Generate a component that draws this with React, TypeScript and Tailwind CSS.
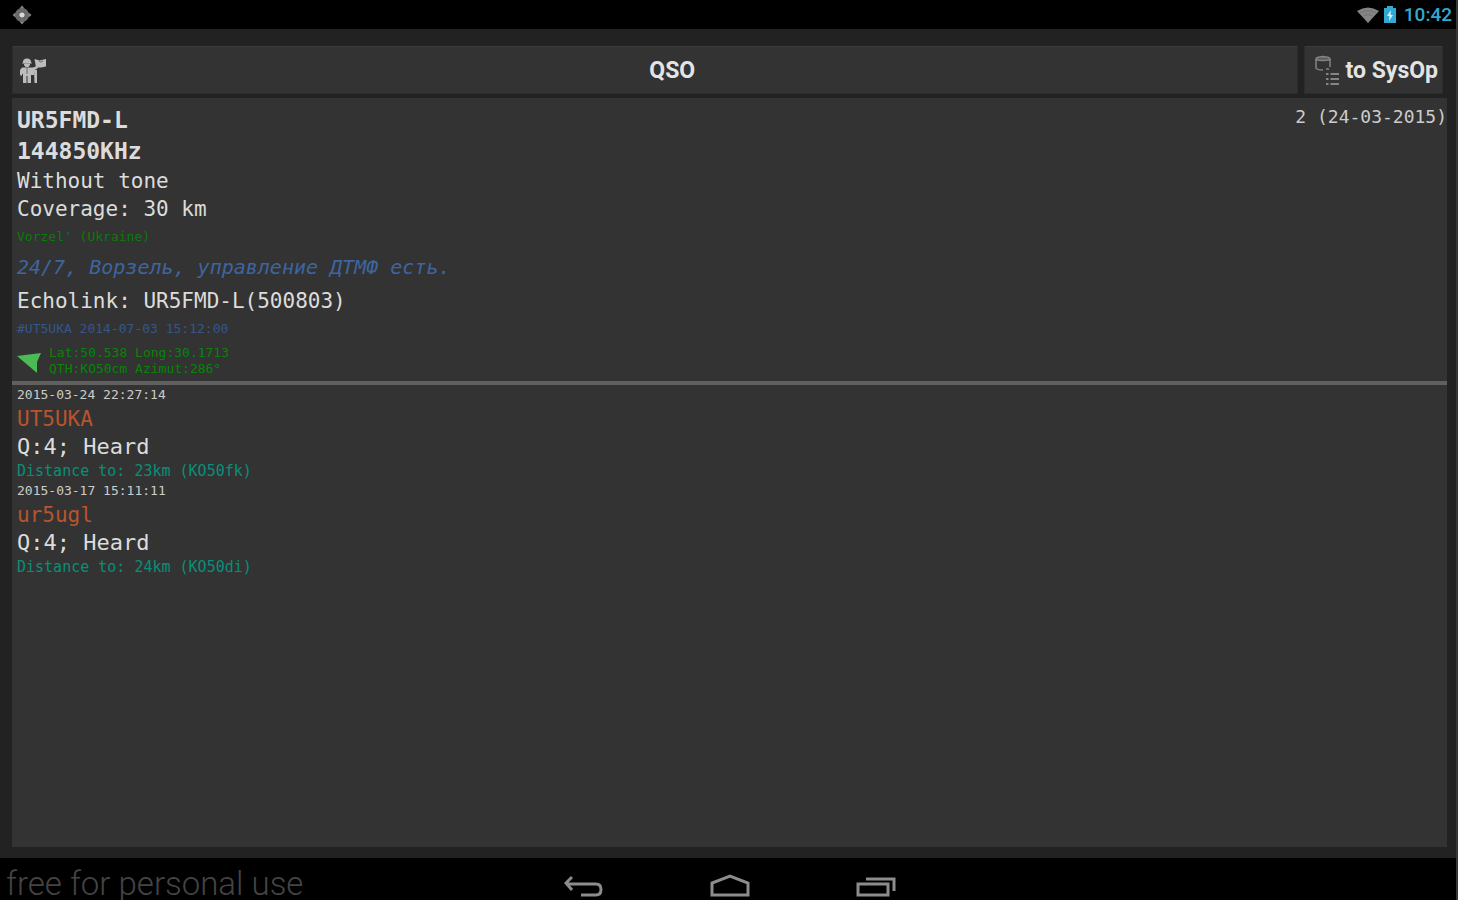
import type { ReactNode } from "react";

type Report = { time: string; call: string; quality: string; distance: string };

const reports: Report[] = [
  { time: "2015-03-24 22:27:14", call: "UT5UKA", quality: "Q:4; Heard", distance: "Distance to: 23km (KO50fk)" },
  { time: "2015-03-17 15:11:11", call: "ur5ugl", quality: "Q:4; Heard", distance: "Distance to: 24km (KO50di)" },
];

function GpsIcon() {
  return (
    <svg className="size-5" viewBox="0 0 20 20" fill="none" aria-hidden="true">
      <circle cx="10" cy="10" r="5" stroke="#6a6a6a" strokeWidth="4" />
      <path d="M10 0.5 12.5 3.5h-5zM10 19.5l2.5-3h-5zM.5 10l3-2.5v5zM19.5 10l-3-2.5v5z" fill="#858585" />
      <circle cx="10" cy="10" r="2.8" fill="#d8d8d8" />
    </svg>
  );
}

function PersonIcon() {
  return (
    <svg className="h-7 w-7" viewBox="0 0 28 28" aria-hidden="true">
      <g fill="#bcbcbc">
        <path d="M4 5q0-3.500 4-3.500T12 5l1 1.500H3z" />
        <path d="M5 6.500h6v1.500L9.500 10h-3L5 8z" />
        <path d="M3 10.500h11l4-1.500 1 2-4 2.500V18h-3v8H8.500v-7h-1v7H4v-9H3v2l-2-1v-5z" />
        <path d="M15 13h3v13h-2.500z" />
        <path d="M15.500 2l5 1.500L27 2v7.500l-5 1h-5z" />
      </g>
      <path d="M8 11v6M20 4l1.500 1L24 4" stroke="#6a6a6a" strokeWidth="1" fill="none" />
    </svg>
  );
}

function SysopIcon() {
  return (
    <svg className="h-8 w-6" viewBox="0 0 24 32" fill="none" stroke="#858585" aria-hidden="true">
      <path d="M1 4q0-2 7-2.500Q15 2 15 4q0 1.500-7 1.500T1 4z" strokeWidth="1.500" fill="#5c5c5c" />
      <path d="M1 4v9q1 2 7 2M15 4v8M11 14h3" strokeWidth="1.500" />
      <path d="M15.500 19H24M15.500 24H24M15.500 29H24" strokeWidth="2" />
      <path d="M11 19h2.500M11 24h2.500M11 29h2.500" strokeWidth="2" />
    </svg>
  );
}

function WifiIcon() {
  return (
    <svg className="h-4 w-6" viewBox="0 0 24 16" aria-hidden="true">
      <path d="M1 4Q12-3 23 4L12 16z" fill="#858585" />
      <path d="M4 6q8-5 16 0M7 9q5-3 10 0" stroke="#747474" fill="none" />
    </svg>
  );
}

function BatteryIcon() {
  return (
    <svg className="h-5 w-3" viewBox="0 0 12 20" aria-hidden="true">
      <path d="M3 1h6v2h3v15H0V3h3z" fill="#32a9d2" />
      <path d="M7 5 3 11h2.500L5 16l4-6H6.500z" fill="#d5f1fb" />
    </svg>
  );
}

function Mono({ className, children }: { className?: string; children: ReactNode }) {
  return <p className={className}>{children}</p>;
}

export default function App() {
  return (
    <div className="flex h-screen flex-col overflow-hidden border-r-2 border-[#383838] bg-[#222222] font-['Roboto',sans-serif] text-[#dcdcdc]">
      <header className="flex h-[29px] shrink-0 items-center justify-between bg-black pr-1 pl-3">
        <GpsIcon />
        <div className="flex items-center gap-2">
          <div className="flex items-center gap-1">
            <WifiIcon />
            <BatteryIcon />
          </div>
          <time className="text-[19px] leading-7 font-medium text-[#32a9d2]">10:42</time>
        </div>
      </header>

      <main className="flex min-h-0 flex-1 flex-col gap-1 pt-[17px] pr-[9px] pb-[11px] pl-3">
        <div className="flex gap-1.5 pr-1 text-[23px] leading-8 font-bold">
          <button className="grid h-12 flex-1 grid-cols-[28px_1fr] items-center border border-[#2c2c2c] border-t-[#3b3b3b] bg-[#333333] pt-0.5 pl-1.5 text-[#e4e4e4]">
            <PersonIcon />
            <span className="text-center">QSO</span>
          </button>
          <button className="flex h-12 items-center gap-1.5 border border-[#2c2c2c] border-t-[#3b3b3b] bg-[#333333] pt-0.5 pr-1 pl-2.5 text-[#e4e4e4]">
            <SysopIcon />
            <span>to SysOp</span>
          </button>
        </div>

        <section className="min-h-0 flex-1 overflow-hidden bg-[#333333] font-['DejaVu_Sans_Mono',monospace]">
          <div className="flex items-start justify-between border-b-4 border-[#606060] pt-[7px] pl-[5px]">
            <div>
              <h1 className="text-[23px] leading-[31px] font-bold">UR5FMD-L</h1>
              <Mono className="text-[23px] leading-[31px] font-bold">144850KHz</Mono>
              <Mono className="text-[21px] leading-7">Without tone</Mono>
              <Mono className="text-[21px] leading-7">Coverage: 30 km</Mono>
              <Mono className="text-[13px] leading-7 text-[#087c08]">Vorzel' (Ukraine)</Mono>
              <Mono className="text-[20px] leading-8 text-[#3e659f] italic">24/7, Ворзель, управление ДТМФ есть.</Mono>
              <Mono className="text-[21px] leading-9">Echolink: UR5FMD-L(500803)</Mono>
              <Mono className="text-[13px] leading-5 text-[#35568a]">#UT5UKA 2014-07-03 15:12:00</Mono>
              <div className="flex items-center gap-2 pt-1.5 pb-1 text-[13px] leading-4 text-[#078407]">
                <svg className="h-6 w-6" viewBox="0 0 24 24" aria-hidden="true">
                  <path d="M0 7 24 4 20 13 20 24z" fill="#4dbb55" />
                </svg>
                <div>
                  <Mono>Lat:50.538 Long:30.1713</Mono>
                  <Mono>QTH:KO50cm Azimut:286°</Mono>
                </div>
              </div>
            </div>
            <Mono className="text-[18px] leading-6 text-[#cccccc]">2 (24-03-2015)</Mono>
          </div>

          <ul className="pl-[5px]">
            {reports.map((report) => (
              <li key={report.time}>
                <Mono className="text-[13px] leading-5 text-[#cccccc]">{report.time}</Mono>
                <Mono className="text-[21px] leading-7 text-[#b9532f]">{report.call}</Mono>
                <Mono className="text-[22px] leading-7">{report.quality}</Mono>
                <Mono className="text-[15px] leading-5 text-[#079078]">{report.distance}</Mono>
              </li>
            ))}
          </ul>
        </section>
      </main>

      <footer className="grid h-[42px] shrink-0 grid-cols-[1fr_auto_1fr] items-start overflow-hidden bg-black">
        <span className="pt-2.5 pl-1.5 text-[33px] leading-8 font-light text-[#444444]">free for personal use</span>
        <nav className="flex gap-[106px] pt-4 pl-1 text-[#8c8c8c]">
          <button aria-label="Back">
            <svg className="h-6 w-10" viewBox="0 0 40 24" fill="none" stroke="currentColor" strokeWidth="3">
              <path d="M8 3 2 9l6 7M3 10h29q5 0 5 5.500T32 21H17" />
            </svg>
          </button>
          <button aria-label="Home">
            <svg className="h-6 w-10" viewBox="0 0 40 24" fill="none" stroke="currentColor" strokeWidth="3">
              <path d="M2 21V9L20 2l18 7v12z" />
            </svg>
          </button>
          <button aria-label="Recent apps">
            <svg className="h-6 w-10" viewBox="0 0 40 24" fill="none" stroke="currentColor" strokeWidth="3">
              <path d="M2 10h30v11H2zM10 5h28v12" />
            </svg>
          </button>
        </nav>
        <span />
      </footer>
    </div>
  );
}
